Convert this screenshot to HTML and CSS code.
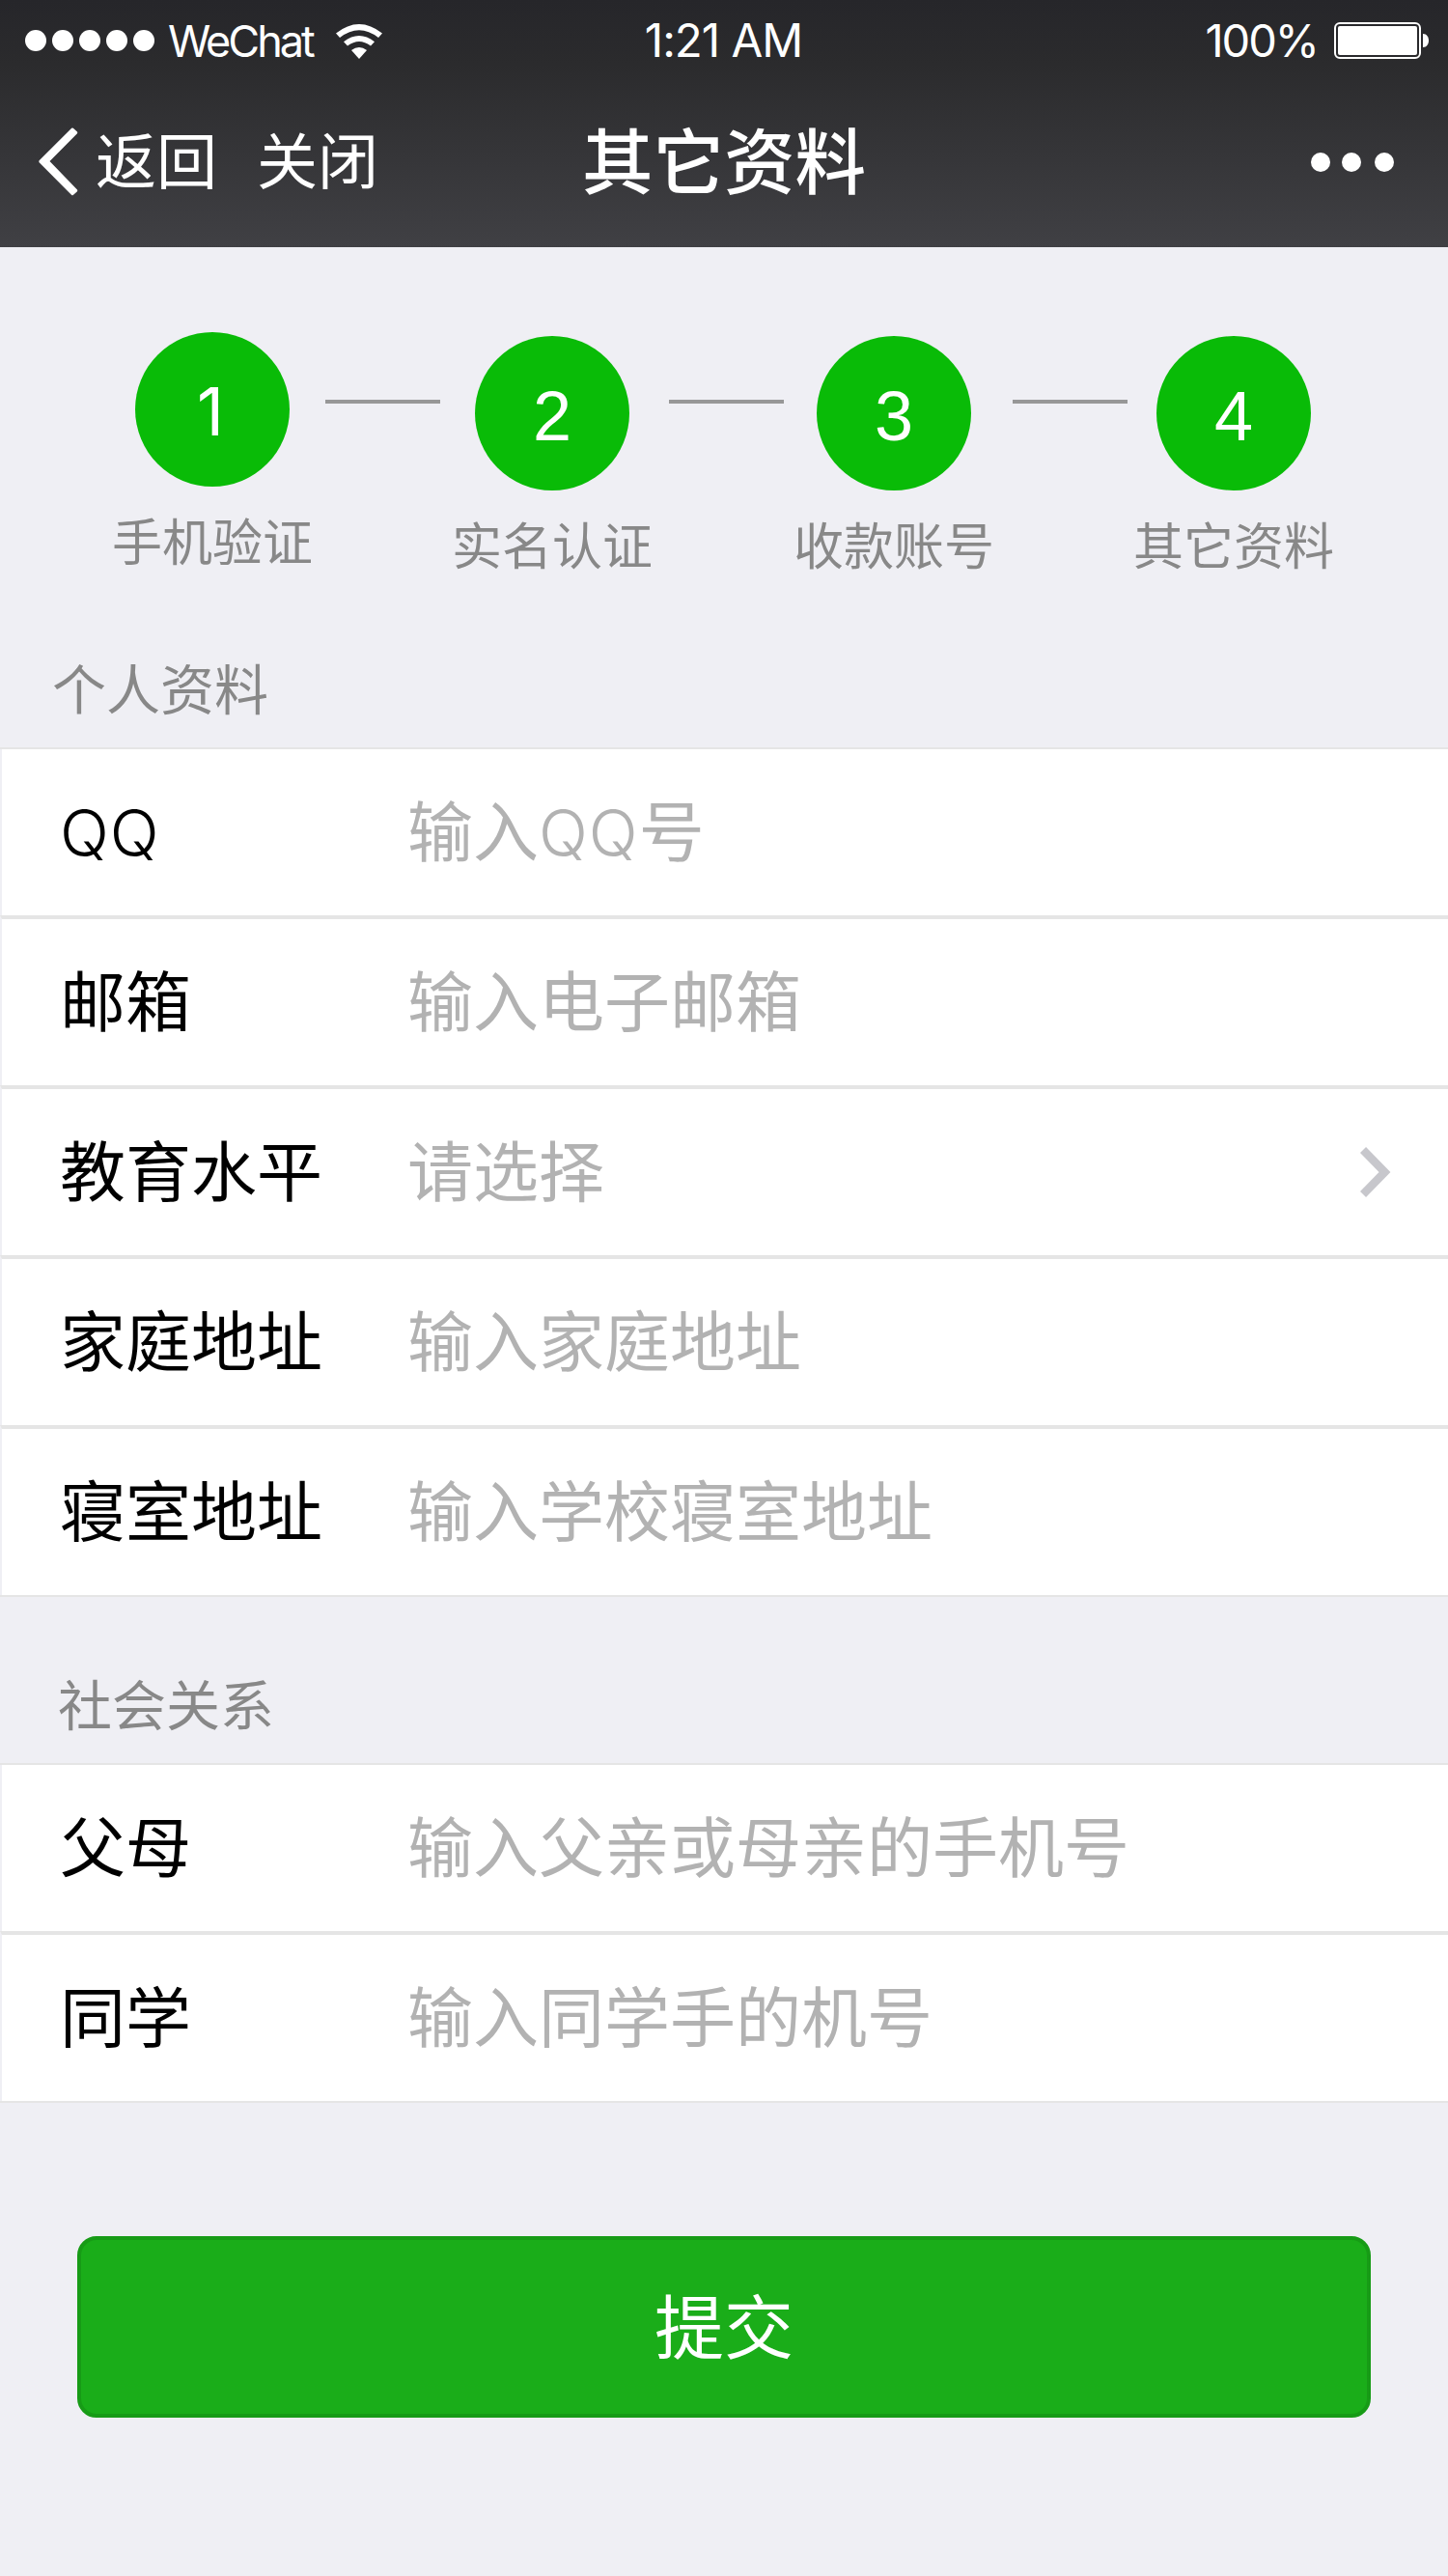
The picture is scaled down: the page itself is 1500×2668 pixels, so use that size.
FILE: index.html
```html
<!DOCTYPE html>
<html lang="zh-CN">
<head>
<meta charset="utf-8">
<title>其它资料</title>
<link rel="stylesheet" href="styles.css">
</head>
<body>
<div class="screen">
  <header class="header">
    <div class="status">
      <div class="status-left">
        <span class="signal"><i></i><i></i><i></i><i></i><i></i></span>
        <span class="carrier">WeChat</span>
        <svg class="wifi" width="48" height="36" viewBox="0 0 48 36">
          <path d="M0 9.500Q24-9.500 48 9.500L44 14Q24-1.500 4 14Z" fill="#fff"/>
          <path d="M8 18.300Q24 5.500 40 18.300L36 22.500Q24 13.500 12 22.500Z" fill="#fff"/>
          <path d="M16 27Q24 21 32 27L24 36Z" fill="#fff"/>
        </svg>
      </div>
      <span class="clock">1:21 AM</span>
      <div class="status-right">
        <span class="percent">100%</span>
        <svg class="battery" width="98" height="38" viewBox="0 0 98 38">
          <rect x="1" y="1" width="88" height="36" rx="5" fill="none" stroke="#fff" stroke-width="2"/>
          <rect x="4" y="4" width="82" height="30" rx="2" fill="#fff"/>
          <path d="M92 12C96 12 98 15.500 98 19S96 26 92 26Z" fill="#fff"/>
        </svg>
      </div>
    </div>
    <nav class="nav">
      <div class="nav-left">
        <svg class="back-icon" width="41" height="71" viewBox="0 0 41 71">
          <path d="M34.200 0.800Q35 0 35.800 0.800L40 4.600Q40.600 5.400 40 6.200L11.500 35L40 64.600Q40.600 65.400 40 66.200L35.800 70Q35 70.600 34.200 70L0.600 36.200Q0 35.200 0.600 34.200Z" fill="#fff"/>
        </svg>
        <span class="back">返回</span>
        <span class="close">关闭</span>
      </div>
      <h1 class="title">其它资料</h1>
      <svg class="more" width="86" height="20" viewBox="0 0 86 20" fill="#fff">
        <circle cx="10" cy="10" r="10"/><circle cx="42" cy="10" r="10"/><circle cx="76" cy="10" r="10"/>
      </svg>
    </nav>
  </header>

  <section class="steps">
    <div class="step step-first"><span class="num num-one">1</span><span class="name">手机验证</span></div>
    <span class="line line-a"></span>
    <div class="step"><span class="num">2</span><span class="name">实名认证</span></div>
    <span class="line line-b"></span>
    <div class="step"><span class="num">3</span><span class="name">收款账号</span></div>
    <span class="line line-c"></span>
    <div class="step"><span class="num">4</span><span class="name">其它资料</span></div>
  </section>

  <h2 class="group-title">个人资料</h2>
  <div class="group">
    <div class="row"><span class="label"><span class="latin">QQ</span></span><span class="hint">输入<span class="latin">QQ</span>号</span></div>
    <div class="row"><span class="label">邮箱</span><span class="hint">输入电子邮箱</span></div>
    <div class="row"><span class="label">教育水平</span><span class="hint">请选择</span>
      <svg class="arrow" width="32" height="52" viewBox="0 0 32 52"><path d="M3 3L25.500 26L3 49" fill="none" stroke="#c7c7cc" stroke-width="8.500"/></svg>
    </div>
    <div class="row"><span class="label">家庭地址</span><span class="hint">输入家庭地址</span></div>
    <div class="row"><span class="label">寝室地址</span><span class="hint">输入学校寝室地址</span></div>
  </div>

  <h2 class="group-title group-title-social">社会关系</h2>
  <div class="group">
    <div class="row"><span class="label">父母</span><span class="hint">输入父亲或母亲的手机号</span></div>
    <div class="row"><span class="label">同学</span><span class="hint">输入同学手的机号</span></div>
  </div>

  <button class="submit" type="button">提交</button>
</div>
</body>
</html>
```
FILE: styles.css
```css
* { box-sizing: border-box; }
body {
  margin: 0;
  background: #efeff4;
  font-family: "Noto Sans CJK SC", sans-serif;
}
.screen {
  width: 1500px;
  height: 2668px;
  overflow: hidden;
  background: #efeff4;
}
.header {
  height: 256px;
  color: #fff;
  background: linear-gradient(#26262a 0, #2b2b2d 26%, #404044 100%);
}
.status {
  display: grid;
  grid-template-columns: 1fr auto 1fr;
  align-items: center;
  height: 82px;
  padding: 0 20px 0 26px;
  font-family: Inter, sans-serif;
  line-height: 82px;
}
.status-left, .status-right { display: flex; align-items: center; }
.status-right { justify-content: flex-end; }
.signal { display: flex; gap: 6px; }
.signal i { width: 22px; height: 22px; border-radius: 50%; background: #fff; }
.carrier { width: 153px; margin-left: 14px; padding-top: 2px; font-size: 45px; letter-spacing: -3px; white-space: nowrap; }
.wifi { margin-left: 21px; margin-top: 2px; }
.clock { margin-right: 7px; font-size: 47.500px; letter-spacing: -1px; }
.percent { font-size: 47px; letter-spacing: -2px; }
.battery { margin-left: 17px; }

.nav {
  display: grid;
  grid-template-columns: 1fr auto 1fr;
  align-items: center;
  height: 170px;
  padding: 0 56px 0 40px;
}
.nav-left { display: flex; align-items: center; font-size: 63px; line-height: 90px; }
.back { margin: -8px 0 0 18px; }
.close { margin: -8px 0 0 41px; }
.title { margin: -8px 0 0 16px; font-size: 73.500px; line-height: 100px; font-weight: 500; }
.more { justify-self: end; margin-top: 1px; }

.steps { display: flex; align-items: flex-start; height: 400px; padding: 92px 0 0 116px; }
.step { display: flex; flex-direction: column; align-items: center; width: 208px; flex: none; }
.step-first { margin-top: -4px; }
.num {
  width: 160px;
  height: 160px;
  border-radius: 50%;
  background: #09bb07;
  color: #fff;
  font: 72px/166px "Liberation Sans", sans-serif;
  text-align: center;
}
.num-one { padding-right: 4px; font: 69px/165px Inter, sans-serif; }
.name { margin-top: 17px; font-size: 52px; line-height: 76px; color: #888; white-space: nowrap; }
.line { flex: none; width: 119px; height: 4px; margin-top: 66px; background: #979797; }
.line-a { margin-left: 13px; margin-right: 12px; }
.line-b { margin-left: 17px; margin-right: 10px; }
.line-c { margin-left: 19px; margin-right: 6px; }

.group-title {
  height: 118px;
  margin: 0;
  padding: 15px 0 0 54px;
  font-size: 56px;
  line-height: 80px;
  font-weight: 400;
  color: #888;
}
.group-title-social { height: 172px; padding: 69px 0 0 60px; }
.group { border-top: 2px solid #e5e5e5; border-bottom: 2px solid #e5e5e5; }
.row {
  display: flex;
  align-items: center;
  height: 172px;
  padding: 0 57px 0 60px;
  border-left: 2px solid #efeff4;
  background: #fff;
  font-size: 68px;
  line-height: 100px;
}
.row + .row { height: 176px; border-top: 4px solid #e5e5e5; }
.label, .hint { height: 100px; margin-bottom: 8px; white-space: nowrap; }
.label { width: 360px; flex: none; color: #000; }
.hint { flex: 1; color: #b2b2b2; }
.latin { font-family: Inter, sans-serif; font-size: 67px; font-weight: 350; line-height: 1; letter-spacing: 1px; }
.arrow { margin-right: 2px; }

.submit {
  display: block;
  width: 1340px;
  height: 188px;
  margin: 138px auto 0;
  padding: 0 0 8px;
  border: 4px solid #179b16;
  border-radius: 20px;
  background: #1aad19;
  color: #fff;
  font: 72px/100px "Noto Sans CJK SC", sans-serif;
}
```
